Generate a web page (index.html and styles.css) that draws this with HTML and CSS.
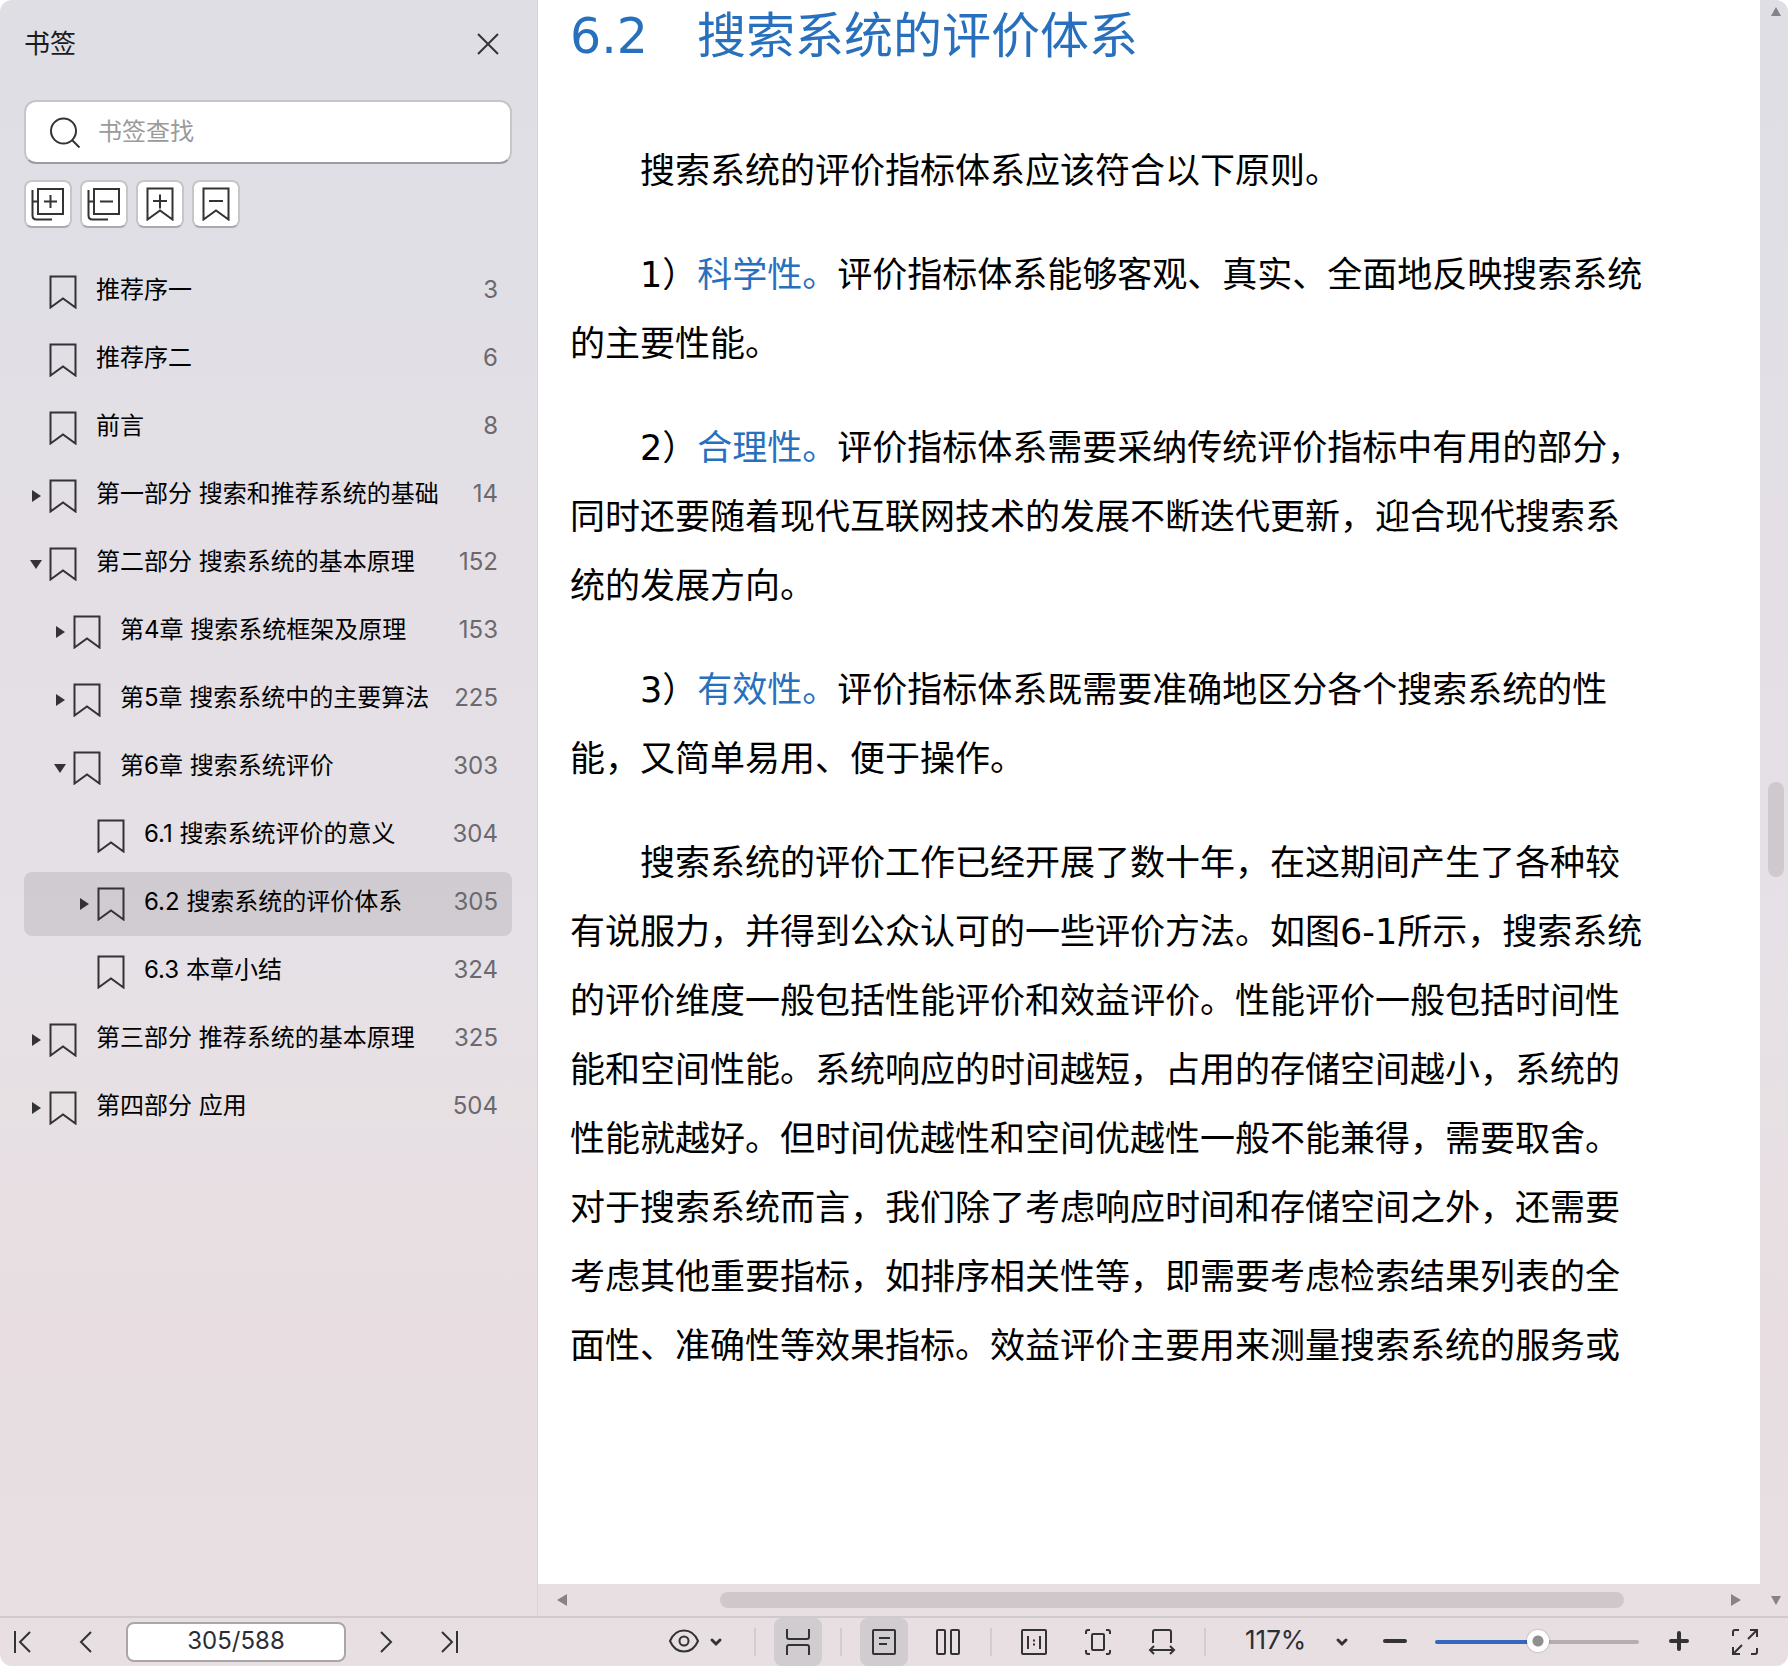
FILE: index.html
```html
<!DOCTYPE html>
<html lang="zh-CN">
<head>
  <meta charset="UTF-8">
  <meta name="viewport" content="width=device-width, initial-scale=1.0">
  <title>6.2 搜索系统的评价体系</title>
  <link rel="stylesheet" href="styles.css">
</head>
<body>
  <svg class="sprite" aria-hidden="true">
    <symbol id="bookmark" viewBox="0 0 28 34">
      <path d="M1.5 1.5h25v31l-12.5-9-12.5 9z"/>
    </symbol>
    <symbol id="closed" viewBox="0 0 16 16">
      <path d="M4 2l9 6-9 6z"/>
    </symbol>
    <symbol id="open" viewBox="0 0 16 16">
      <path d="M2 4h12l-6 9z"/>
    </symbol>
    <symbol id="chevron" viewBox="0 0 14 12">
      <path d="M3 4l4 4 4-4"/>
    </symbol>
  </svg>

  <div class="app">
    <aside class="sidebar">
      <header class="sidebar-header">
        <h2>书签</h2>
        <button type="button" class="close" aria-label="关闭">
          <svg class="line-icon" width="24" height="24" viewBox="0 0 24 24"><path d="M2 2l20 20M22 2L2 22"/></svg>
        </button>
      </header>

      <label class="search">
        <svg class="line-icon" width="32" height="32" viewBox="0 0 32 32"><circle cx="13.500" cy="15" r="12.500"/><path d="M22 24l7.500 7.500"/></svg>
        <input type="search" placeholder="书签查找" aria-label="书签查找">
      </label>

      <div class="bookmark-tools">
        <button type="button" aria-label="展开全部">
          <svg class="line-icon" width="34" height="34" viewBox="0 0 34 34"><rect x="7" y="2" width="25" height="25"/><path d="M1.5 3v25.500q0 4 4 4H21M1.500 14.500H7M19.500 8v13M13 14.500h13"/></svg>
        </button>
        <button type="button" aria-label="收起全部">
          <svg class="line-icon" width="34" height="34" viewBox="0 0 34 34"><rect x="7" y="2" width="25" height="25"/><path d="M1.5 3v25.500q0 4 4 4H21M1.500 14.500H7M13 14.500h13"/></svg>
        </button>
        <button type="button" aria-label="添加书签">
          <svg class="line-icon" width="28" height="34" viewBox="0 0 28 34"><use href="#bookmark"/><path d="M14 7.500v14M7 14h14"/></svg>
        </button>
        <button type="button" aria-label="删除书签">
          <svg class="line-icon" width="28" height="34" viewBox="0 0 28 34"><use href="#bookmark"/><path d="M7 14h14"/></svg>
        </button>
      </div>

      <nav>
        <ul class="tree">
          <li><a href="#"><span class="arrow"></span><svg class="mark"><use href="#bookmark"/></svg><span class="label">推荐序一</span><span class="num">3</span></a></li>
          <li><a href="#"><span class="arrow"></span><svg class="mark"><use href="#bookmark"/></svg><span class="label">推荐序二</span><span class="num">6</span></a></li>
          <li><a href="#"><span class="arrow"></span><svg class="mark"><use href="#bookmark"/></svg><span class="label">前言</span><span class="num">8</span></a></li>
          <li><a href="#"><svg class="arrow"><use href="#closed"/></svg><svg class="mark"><use href="#bookmark"/></svg><span class="label">第一部分 搜索和推荐系统的基础</span><span class="num">14</span></a></li>
          <li><a href="#"><svg class="arrow"><use href="#open"/></svg><svg class="mark"><use href="#bookmark"/></svg><span class="label">第二部分 搜索系统的基本原理</span><span class="num">152</span></a></li>
          <li class="level-2"><a href="#"><svg class="arrow"><use href="#closed"/></svg><svg class="mark"><use href="#bookmark"/></svg><span class="label">第4章 搜索系统框架及原理</span><span class="num">153</span></a></li>
          <li class="level-2"><a href="#"><svg class="arrow"><use href="#closed"/></svg><svg class="mark"><use href="#bookmark"/></svg><span class="label">第5章 搜索系统中的主要算法</span><span class="num">225</span></a></li>
          <li class="level-2"><a href="#"><svg class="arrow"><use href="#open"/></svg><svg class="mark"><use href="#bookmark"/></svg><span class="label">第6章 搜索系统评价</span><span class="num">303</span></a></li>
          <li class="level-3"><a href="#"><span class="arrow"></span><svg class="mark"><use href="#bookmark"/></svg><span class="label">6.1 搜索系统评价的意义</span><span class="num">304</span></a></li>
          <li class="level-3"><a href="#" class="current"><svg class="arrow"><use href="#closed"/></svg><svg class="mark"><use href="#bookmark"/></svg><span class="label">6.2 搜索系统的评价体系</span><span class="num">305</span></a></li>
          <li class="level-3"><a href="#"><span class="arrow"></span><svg class="mark"><use href="#bookmark"/></svg><span class="label">6.3 本章小结</span><span class="num">324</span></a></li>
          <li><a href="#"><svg class="arrow"><use href="#closed"/></svg><svg class="mark"><use href="#bookmark"/></svg><span class="label">第三部分 推荐系统的基本原理</span><span class="num">325</span></a></li>
          <li><a href="#"><svg class="arrow"><use href="#closed"/></svg><svg class="mark"><use href="#bookmark"/></svg><span class="label">第四部分 应用</span><span class="num">504</span></a></li>
        </ul>
      </nav>
    </aside>

    <section class="viewer">
      <div class="viewer-main">
        <article class="page">
          <h1>6.2　搜索系统的评价体系</h1>
          <p>搜索系统的评价指标体系应该符合以下原则。</p>
          <p>1）<em>科学性。</em>评价指标体系能够客观、真实、全面地反映搜索系统的主要性能。</p>
          <p>2）<em>合理性。</em>评价指标体系需要采纳传统评价指标中有用的部分，同时还要随着现代互联网技术的发展不断迭代更新，迎合现代搜索系统的发展方向。</p>
          <p>3）<em>有效性。</em>评价指标体系既需要准确地区分各个搜索系统的性能，又简单易用、便于操作。</p>
          <p>搜索系统的评价工作已经开展了数十年，在这期间产生了各种较有说服力，并得到公众认可的一些评价方法。如图6-1所示，搜索系统的评价维度一般包括性能评价和效益评价。性能评价一般包括时间性能和空间性能。系统响应的时间越短，占用的存储空间越小，系统的性能就越好。但时间优越性和空间优越性一般不能兼得，需要取舍。对于搜索系统而言，我们除了考虑响应时间和存储空间之外，还需要考虑其他重要指标，如排序相关性等，即需要考虑检索结果列表的全面性、准确性等效果指标。效益评价主要用来测量搜索系统的服务或</p>
        </article>
        <div class="scroll-x">
          <button type="button" aria-label="向左滚动"><svg width="12" height="12" viewBox="0 0 12 12"><path d="M1 6l10-6v12z"/></svg></button>
          <div class="track"><div class="thumb" style="left: 11.9%; width: 80.3%"></div></div>
          <button type="button" aria-label="向右滚动"><svg width="12" height="12" viewBox="0 0 12 12"><path d="M11 6L1 0v12z"/></svg></button>
        </div>
      </div>
      <div class="scroll-y">
        <button type="button" aria-label="向上滚动"><svg width="12" height="12" viewBox="0 0 12 12"><path d="M6 1l5 9H1z"/></svg></button>
        <div class="track"><div class="thumb" style="top: 48.6%; height: 6.1%"></div></div>
        <button type="button" class="down" aria-label="向下滚动"><svg width="12" height="12" viewBox="0 0 12 12"><path d="M6 11l5-9H1z"/></svg></button>
      </div>
    </section>

    <footer class="statusbar">
      <div class="pager">
        <div class="pager-buttons">
          <button type="button" aria-label="第一页"><svg class="line-icon" width="20" height="24" viewBox="0 0 20 24"><path d="M3 1v22M18 2L8 12l10 10"/></svg></button>
          <button type="button" aria-label="上一页"><svg class="line-icon" width="20" height="24" viewBox="0 0 20 24"><path d="M15 2L5 12l10 10"/></svg></button>
        </div>
        <input type="text" value="305/588" aria-label="页码">
        <div class="pager-buttons">
          <button type="button" aria-label="下一页"><svg class="line-icon" width="20" height="24" viewBox="0 0 20 24"><path d="M5 2l10 10L5 22"/></svg></button>
          <button type="button" aria-label="最后一页"><svg class="line-icon" width="20" height="24" viewBox="0 0 20 24"><path d="M2 2l10 10L2 22M17 1v22"/></svg></button>
        </div>
      </div>

      <div class="view-tools">
        <button type="button" class="eye" aria-label="护眼模式">
          <svg class="line-icon" width="32" height="26" viewBox="0 0 32 26"><path d="M2 12C5 5 10 1.500 16 1.500S27 5 30 12C27 19 22 22.500 16 22.500S5 19 2 12z"/><circle cx="16" cy="12" r="4.500"/></svg>
          <svg class="chevron" width="14" height="12"><use href="#chevron"/></svg>
        </button>
        <span class="divider"></span>
        <button type="button" class="active" aria-label="连续阅读"><svg class="line-icon" width="26" height="28" viewBox="0 0 26 28"><path d="M2 1v8q0 2 2 2h18q2 0 2-2V1M2 27v-8q0-2 2-2h18q2 0 2 2v8"/></svg></button>
        <span class="divider"></span>
        <button type="button" class="active" aria-label="单页"><svg class="line-icon" width="26" height="28" viewBox="0 0 26 28"><rect x="2" y="2" width="22" height="24" rx="1"/><path d="M8 10h11M8 16h8"/></svg></button>
        <button type="button" aria-label="双页"><svg class="line-icon" width="26" height="28" viewBox="0 0 26 28"><rect x="2" y="2" width="8" height="24" rx="1"/><rect x="16" y="2" width="8" height="24" rx="1"/></svg></button>
        <span class="divider"></span>
        <button type="button" aria-label="实际大小"><svg class="line-icon" width="28" height="28" viewBox="0 0 28 28"><rect x="2" y="2" width="24" height="24" rx="1"/><path d="M8 8v13M20 8v13M14 11.500v2M14 15.500v2"/></svg></button>
        <button type="button" aria-label="适合页面"><svg class="line-icon" width="28" height="28" viewBox="0 0 28 28"><rect x="8" y="6" width="12" height="16" rx="1"/><path d="M2 6V4q0-2 2-2h2M22 2h2q2 0 2 2v2M26 22v2q0 2-2 2h-2M6 26H4q-2 0-2-2v-2"/></svg></button>
        <button type="button" aria-label="适合宽度"><svg class="line-icon" width="28" height="28" viewBox="0 0 28 28"><path d="M5 15V4q0-2 2-2h14q2 0 2 2v11M2 22h24M6 18l-4 4 4 4M22 18l4 4-4 4"/></svg></button>
        <span class="divider"></span>
      </div>

      <div class="zoom">
        <div class="zoom-level">
          <select aria-label="缩放比例">
            <option>117%</option>
          </select>
          <svg class="chevron" width="14" height="12"><use href="#chevron"/></svg>
        </div>
        <button type="button" aria-label="缩小"><svg class="bold-icon" width="28" height="24" viewBox="0 0 28 24"><path d="M4 11h20"/></svg></button>
        <input type="range" min="0" max="200" value="101" aria-label="缩放">
        <button type="button" aria-label="放大"><svg class="bold-icon" width="24" height="24" viewBox="0 0 24 24"><path d="M4 11h16M12 3v16"/></svg></button>
        <button type="button" class="fullscreen" aria-label="全屏"><svg class="line-icon" width="28" height="28" viewBox="0 0 28 28"><path d="M2 8V4q0-2 2-2h4M19 2h7v7M26 2l-9 9M26 20v4q0 2-2 2h-4M2 19v7h7M2 26l9-9"/></svg></button>
      </div>
    </footer>
  </div>
</body>
</html>
```
FILE: styles.css
```css
* {
  box-sizing: border-box;
}

body {
  margin: 0;
  background: #fff;
  color: #000;
  font-family: Inter, "Noto Sans CJK SC", sans-serif;
  font-size: 24px;
  line-height: 28px;
}

button {
  display: flex;
  align-items: center;
  justify-content: center;
  padding: 0;
  border: none;
  background: none;
  cursor: pointer;
}

input,
select {
  font: inherit;
}

.sprite {
  display: none;
}

.line-icon {
  fill: none;
  stroke: #333;
  stroke-width: 2;
}

.bold-icon {
  fill: none;
  stroke: #333;
  stroke-width: 4;
  stroke-linecap: round;
}

.chevron {
  fill: none;
  stroke: #333;
  stroke-width: 3;
  stroke-linecap: round;
}

.app {
  display: grid;
  grid-template-columns: 538px 1fr;
  grid-template-rows: 1fr auto;
  height: 100vh;
  overflow: hidden;
  border-radius: 12px;
  background: linear-gradient(#dfdee4 0%, #e0dfe5 15%, #e4dfe5 35%, #e6e1e5 60%, #e8dee1 80%, #e7dfe1 100%);
}

/* sidebar */
.sidebar {
  padding: 20px 25px 0 24px;
  border-right: 1px solid #d8d5d9;
}

.sidebar-header {
  display: flex;
  align-items: center;
  justify-content: space-between;
  height: 48px;
  margin-bottom: 32px;
}

.sidebar-header h2 {
  margin: 0;
  color: #1c1b20;
  font-size: 26px;
  font-weight: 400;
}

.close {
  width: 48px;
  height: 48px;
}

.search {
  display: flex;
  align-items: center;
  gap: 16px;
  height: 64px;
  padding: 0 24px;
  border: 2px solid #c6c5ca;
  border-bottom-color: #9d9ca0;
  border-radius: 12px;
  background: #fff;
}

.search input {
  flex: 1;
  min-width: 0;
  padding: 0;
  border: none;
  outline: none;
  background: none;
}

.search input::placeholder {
  color: #9a9a9a;
}

.bookmark-tools {
  display: flex;
  gap: 8px;
  margin: 16px 0 32px;
}

.bookmark-tools button {
  width: 48px;
  height: 48px;
  border: 2px solid #c6c5ca;
  border-bottom-color: #aaa9ad;
  border-radius: 8px;
  background: #fff;
}

.tree {
  margin: 0;
  padding: 0;
  list-style: none;
}

.tree li {
  margin-bottom: 4px;
}

.tree a {
  display: flex;
  align-items: center;
  height: 64px;
  padding: 0 14px 0 4px;
  border-radius: 8px;
  color: #000;
  text-decoration: none;
}

.tree .level-2 a {
  padding-left: 28px;
}

.tree .level-3 a {
  padding-left: 52px;
}

.tree .current {
  background: rgba(0, 0, 0, 0.09);
}

.arrow {
  width: 16px;
  height: 16px;
  margin-right: 5px;
  fill: #333;
}

.mark {
  width: 28px;
  height: 34px;
  margin-right: 19px;
  fill: none;
  stroke: #333;
  stroke-width: 2;
}

.label,
.num {
  padding-bottom: 4px;
}

.label {
  flex: 1;
  white-space: nowrap;
}

.num {
  color: #6b696e;
}

/* document */
.viewer {
  display: flex;
  min-width: 0;
  min-height: 0;
}

.viewer-main {
  display: flex;
  flex: 1;
  flex-direction: column;
  min-width: 0;
}

.page {
  flex: 1;
  min-height: 0;
  overflow: hidden;
  padding: 2px 112px 0 32px;
  background: #fff;
  font-family: "DejaVu Sans", "Noto Sans CJK SC", sans-serif;
  font-size: 35px;
  line-height: 69px;
  text-spacing-trim: space-all;
}

.page h1 {
  margin: 0 0 65px;
  color: #2870bd;
  font-size: 49px;
  font-weight: 400;
  line-height: 70px;
}

.page p {
  margin: 0 0 35px;
  text-indent: 2em;
}

.page em {
  color: #2870bd;
  font-style: normal;
}

.scroll-x,
.scroll-y {
  display: flex;
  fill: #858385;
}

.scroll-x {
  height: 32px;
  padding: 8px 0;
}

.scroll-x button {
  width: 48px;
}

.scroll-y {
  flex-direction: column;
  width: 28px;
  padding: 0 4px 0 8px;
}

.scroll-y button {
  height: 24px;
}

.scroll-y .down {
  height: 32px;
}

.track {
  position: relative;
  flex: 1;
}

.thumb {
  position: absolute;
  width: 16px;
  height: 16px;
  border-radius: 8px;
  background: rgba(0, 0, 0, 0.1);
}

/* status bar */
.statusbar {
  display: flex;
  grid-column: 1 / -1;
  align-items: center;
  height: 50px;
  padding: 0 23px 0 2px;
  border-top: 2px solid #d0c9cd;
}

.statusbar button {
  width: 40px;
  height: 44px;
}

.pager {
  display: flex;
  flex: 1;
  align-items: center;
  gap: 20px;
}

.pager-buttons {
  display: flex;
  gap: 24px;
}

.pager input {
  width: 220px;
  height: 40px;
  padding: 0 0 4px;
  border: 2px solid #aaa5a8;
  border-radius: 8px;
  background: #fff;
  color: #2d2d36;
  text-align: center;
}

.view-tools {
  display: flex;
  align-items: center;
}

.view-tools button {
  width: 48px;
  height: 48px;
  border-radius: 8px;
}

.view-tools button + button {
  margin-left: 16px;
}

.view-tools .eye {
  justify-content: flex-start;
  gap: 9px;
  width: 68px;
}

.view-tools .active {
  background: #d0cccf;
}

.divider {
  width: 2px;
  height: 28px;
  margin: 0 18px;
  background: #d2ccd0;
}

.zoom {
  display: flex;
  align-items: center;
}

.zoom-level {
  display: grid;
  align-items: center;
  width: 104px;
  margin: 0 26px 0 21px;
}

.zoom-level select,
.zoom-level .chevron {
  grid-area: 1 / 1;
}

.zoom-level .chevron {
  justify-self: end;
  pointer-events: none;
}

.zoom-level select {
  padding: 0 0 4px;
  border: none;
  background: none;
  color: #2d2d36;
  font-size: 26px;
  appearance: none;
}

.zoom input {
  width: 204px;
  height: 24px;
  margin: 0 20px;
  background: none;
  appearance: none;
}

.zoom input::-webkit-slider-runnable-track {
  height: 4px;
  border-radius: 2px;
  background: linear-gradient(to right, #3568bf 50%, #b4aeb1 50%);
}

.zoom input::-webkit-slider-thumb {
  width: 22px;
  height: 22px;
  margin-top: -10px;
  border-radius: 50%;
  background: radial-gradient(circle, #8d908f 5px, #fff 6px);
  box-shadow: 0 0 2px rgba(0, 0, 0, 0.4);
  appearance: none;
}

.statusbar .fullscreen {
  margin-left: 26px;
}
```
